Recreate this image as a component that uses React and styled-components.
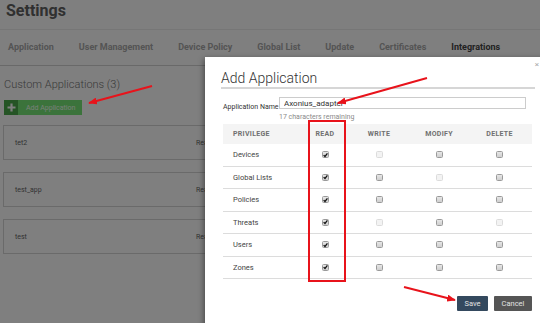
import React from "react";
import styled, { createGlobalStyle } from "styled-components";

const Global = createGlobalStyle`
  html, body { margin: 0; padding: 0; width: 540px; height: 323px; overflow: hidden; background: #fff; }
  body { font-family: Roboto, "Liberation Sans", sans-serif; }
  * { box-sizing: border-box; }
`;

const Screen = styled.div`
  position: relative;
  width: 540px;
  height: 323px;
  overflow: hidden;
  background: #fff;
`;

const Header = styled.header`
  height: 30px;
  padding: 1px 6px 0;
  border-bottom: 1px solid #ececec;
`;

const PageTitle = styled.h1`
  margin: 0;
  font-size: 16px;
  line-height: 20px;
  font-weight: 700;
  color: #606060;
`;

const Tabs = styled.nav`
  display: flex;
  align-items: center;
  gap: 25px;
  height: 36px;
  padding-left: 8px;
  border-bottom: 1px solid #d2d2d2;
`;

const Tab = styled.span`
  font-size: 9px;
  line-height: 11px;
  font-weight: 700;
  color: ${(p) => (p.$active ? "#444" : "#a8a8a8")};
`;

const Content = styled.main`
  padding: 0 3px;
`;

const SectionTitle = styled.h2`
  margin: 12px 0 0 1px;
  font-size: 11px;
  line-height: 13px;
  font-weight: 300;
  color: #747474;
`;

const AddButton = styled.button`
  display: flex;
  align-items: stretch;
  width: 78px;
  height: 15px;
  margin: 9px 0 0 1px;
  padding: 0;
  border: none;
  background: #76e676;
  font-family: inherit;
  cursor: pointer;
`;

const PlusBox = styled.span`
  display: flex;
  align-items: center;
  justify-content: center;
  width: 14px;
  background: #4aa84a;
`;

const AddLabel = styled.span`
  display: flex;
  align-items: center;
  padding-left: 8px;
  font-size: 7px;
  white-space: nowrap;
  color: #f0fff0;
`;

const CardList = styled.div`
  display: flex;
  flex-direction: column;
  gap: 12px;
  margin-top: 10px;
`;

const Card = styled.div`
  display: grid;
  grid-template-columns: 181px 1fr;
  align-items: center;
  width: 522px;
  height: 35px;
  padding-left: 11px;
  border: 1px solid #d4d4d4;
  font-size: 7px;
  color: #666;
`;

const Backdrop = styled.div`
  position: absolute;
  inset: 0;
  background: rgba(0, 0, 0, 0.5);
`;

const Modal = styled.section`
  position: absolute;
  left: 205px;
  top: 57px;
  width: 343px;
  height: 290px;
  padding: 12px 16px 0;
  background: #fff;
  box-shadow: -1px 2px 6px rgba(0, 0, 0, 0.45);
`;

const Close = styled.span`
  position: absolute;
  top: 3px;
  right: 9px;
  font-size: 8px;
  color: #aaa;
`;

const ModalTitle = styled.h3`
  margin: 0 -3px 0 0;
  font-size: 14px;
  line-height: 18px;
  font-weight: 300;
  color: #333;
  border-bottom: 2px solid #d6d6d6;
`;

const NameRow = styled.div`
  display: flex;
  align-items: flex-start;
  margin-top: 8px;
  padding-left: 2px;
`;

const NameLabel = styled.label`
  flex: 0 0 56px;
  padding-top: 6px;
  font-size: 7px;
  line-height: 9px;
  white-space: nowrap;
  color: #333;
`;

const NameInput = styled.input`
  width: 247px;
  height: 12px;
  padding: 0 4px;
  border: 1px solid #ccc;
  font-family: inherit;
  font-size: 8px;
  color: #333;
  outline: none;
`;

const Hint = styled.div`
  margin: 1px 0 0 58px;
  font-size: 7px;
  line-height: 9px;
  color: #8a8a8a;
`;

const Table = styled.div`
  position: relative;
  width: 309px;
  margin: 2px 0 0 2px;
`;

const cols = "80px 44px 64px 56px 65px";

const HeadRow = styled.div`
  display: grid;
  grid-template-columns: ${cols};
  align-items: center;
  height: 20px;
  background: #f4f4f4;
  font-size: 7px;
  font-weight: 700;
  letter-spacing: 0.3px;
  color: #707070;
`;

const Row = styled.div`
  display: grid;
  grid-template-columns: ${cols};
  align-items: center;
  height: 22.5px;
  border-bottom: 1px solid #dcdcdc;
  font-size: 7.5px;
  color: #444;
  &:last-child { border-bottom: none; }
`;

const NameCell = styled.span`
  padding-left: 10px;
`;

const CenterCell = styled.span`
  display: flex;
  justify-content: center;
`;

const Box = styled.span`
  display: flex;
  align-items: center;
  justify-content: center;
  width: 7px;
  height: 7px;
  border: 1px solid ${(p) => (p.$disabled ? "#dcdcdc" : "#9a9a9a")};
  border-radius: 1.5px;
  background: ${(p) =>
    p.$disabled ? "#f3f3f3" : "linear-gradient(#e6e6e6, #cfcfcf)"};
`;

const Highlight = styled.div`
  position: absolute;
  left: 85px;
  top: -4px;
  width: 38px;
  height: 162px;
  border: 2px solid #e8131b;
  pointer-events: none;
`;

const Footer = styled.div`
  display: flex;
  justify-content: flex-end;
  gap: 6px;
  margin-top: 16.5px;
`;

const Btn = styled.button`
  width: ${(p) => p.$w}px;
  height: 15px;
  padding: 0;
  border: none;
  border-radius: 1px;
  background: ${(p) => p.$bg};
  color: #e2e2e2;
  font-family: inherit;
  font-size: 7.5px;
`;

const Annotations = styled.svg`
  position: absolute;
  left: 0;
  top: 0;
  pointer-events: none;
`;

const Check = ({ checked, disabled }) => (
  <Box $disabled={disabled}>
    {checked && (
      <svg width="6" height="6" viewBox="0 0 6 6">
        <path d="M0.8 3.1 L2.4 4.8 L5.3 1" fill="none" stroke="#111" strokeWidth="1.5" />
      </svg>
    )}
  </Box>
);

const tabs = ["Application", "User Management", "Device Policy", "Global List", "Update", "Certificates", "Integrations"];
const apps = ["tet2", "test_app", "test"];

// disabled flags for [write, modify, delete]
const privileges = [
  { name: "Devices", dis: [true, false, false] },
  { name: "Global Lists", dis: [false, true, false] },
  { name: "Policies", dis: [false, false, false] },
  { name: "Threats", dis: [true, false, true] },
  { name: "Users", dis: [false, false, false] },
  { name: "Zones", dis: [false, false, false] },
];

const Arrow = ({ x1, y1, x2, y2 }) => (
  <line x1={x1} y1={y1} x2={x2} y2={y2} stroke="#e8131b" strokeWidth="2" markerEnd="url(#head)" />
);

export default function App() {
  return (
    <Screen>
      <Global />
      <Header>
        <PageTitle>Settings</PageTitle>
      </Header>
      <Tabs>
        {tabs.map((t) => (
          <Tab key={t} $active={t === "Integrations"}>{t}</Tab>
        ))}
      </Tabs>
      <Content>
        <SectionTitle>Custom Applications (3)</SectionTitle>
        <AddButton>
          <PlusBox>
            <svg width="9" height="9" viewBox="0 0 9 9">
              <path d="M4.5 0.5 V8.5 M0.5 4.5 H8.5" stroke="#fff" strokeWidth="2.2" />
            </svg>
          </PlusBox>
          <AddLabel>Add Application</AddLabel>
        </AddButton>
        <CardList>
          {apps.map((a) => (
            <Card key={a}>
              <span>{a}</span>
              <span>Read</span>
            </Card>
          ))}
        </CardList>
      </Content>

      <Backdrop />

      <Modal>
        <Close>×</Close>
        <ModalTitle>Add Application</ModalTitle>
        <NameRow>
          <NameLabel>Application Name</NameLabel>
          <NameInput defaultValue="Axonius_adapter" />
        </NameRow>
        <Hint>17 characters remaining</Hint>
        <Table>
          <HeadRow>
            <NameCell>PRIVILEGE</NameCell>
            <CenterCell>READ</CenterCell>
            <CenterCell>WRITE</CenterCell>
            <CenterCell>MODIFY</CenterCell>
            <CenterCell>DELETE</CenterCell>
          </HeadRow>
          {privileges.map((p) => (
            <Row key={p.name}>
              <NameCell>{p.name}</NameCell>
              <CenterCell><Check checked /></CenterCell>
              {p.dis.map((d, i) => (
                <CenterCell key={i}><Check disabled={d} /></CenterCell>
              ))}
            </Row>
          ))}
          <Highlight />
        </Table>
        <Footer>
          <Btn $w={31} $bg="#34495e">Save</Btn>
          <Btn $w={38} $bg="#555">Cancel</Btn>
        </Footer>
      </Modal>

      <Annotations width="540" height="323" viewBox="0 0 540 323">
        <defs>
          <marker id="head" viewBox="0 0 10 8" refX="9" refY="4" markerWidth="9" markerHeight="7" markerUnits="userSpaceOnUse" orient="auto">
            <path d="M0 0 L10 4 L0 8 Z" fill="#e8131b" />
          </marker>
        </defs>
        <Arrow x1={152} y1={86} x2={89} y2={103} />
        <Arrow x1={427} y1={78} x2={338} y2={103} />
        <Arrow x1={404} y1={287} x2={455} y2={300} />
      </Annotations>
    </Screen>
  );
}
